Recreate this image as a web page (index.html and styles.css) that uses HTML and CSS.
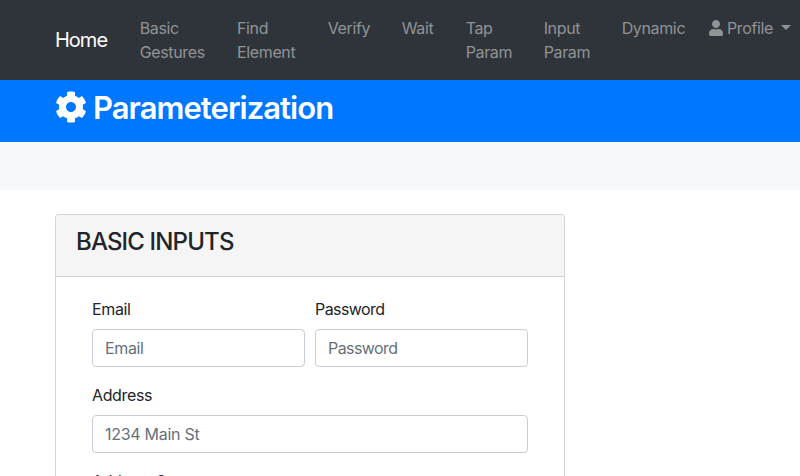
FILE: index.html
```html
<!DOCTYPE html>
<html lang="en">
<head>
<meta charset="utf-8">
<title>Parameterization</title>
<link rel="stylesheet" href="styles.css">
</head>
<body>
<nav class="navbar">
  <a class="brand" href="#">Home</a>
  <ul class="links">
    <li class="n1"><a href="#">Basic<br>Gestures</a></li>
    <li class="n2"><a href="#">Find<br>Element</a></li>
    <li class="n3"><a href="#">Verify</a></li>
    <li class="n4"><a href="#">Wait</a></li>
    <li class="n5"><a href="#">Tap<br>Param</a></li>
    <li class="n6"><a href="#">Input<br>Param</a></li>
    <li class="n7"><a href="#">Dynamic</a></li>
    <li class="profile"><a href="#"><svg class="user" viewBox="0 0 448 512"><path d="M224 256c70.7 0 128-57.3 128-128S294.700 0 224 0 96 57.300 96 128s57.300 128 128 128zm89.600 32h-16.700c-22.200 10.200-46.900 16-72.900 16s-50.600-5.800-72.900-16h-16.700C60.200 288 0 348.200 0 422.400V464c0 26.500 21.500 48 48 48h352c26.500 0 48-21.500 48-48v-41.600c0-74.200-60.200-134.400-134.400-134.400z"/></svg>Profile<i class="caret"></i></a></li>
  </ul>
</nav>
<header class="banner">
  <svg class="cog" viewBox="0 0 512 512"><path d="M487.400 315.700l-42.600-24.600c4.300-23.200 4.300-47 0-70.200l42.600-24.600c4.900-2.800 7.100-8.600 5.500-14-11.100-35.600-30-67.800-54.700-94.600-3.800-4.100-10-5.100-14.800-2.300L380.800 110c-17.900-15.400-38.500-27.300-60.800-35.100V25.800c0-5.600-3.900-10.500-9.400-11.700-36.700-8.200-74.300-7.800-109.200 0-5.500 1.200-9.400 6.100-9.400 11.700V75c-22.200 7.900-42.800 19.800-60.800 35.100L88.700 85.500c-4.900-2.800-11-1.900-14.800 2.300-24.700 26.700-43.600 58.900-54.700 94.600-1.700 5.400.6 11.200 5.500 14L67.300 221c-4.300 23.200-4.300 47 0 70.200l-42.600 24.600c-4.900 2.800-7.100 8.600-5.500 14 11.100 35.600 30 67.800 54.700 94.600 3.800 4.100 10 5.100 14.800 2.300l42.600-24.600c17.900 15.400 38.500 27.300 60.800 35.100v49.200c0 5.600 3.900 10.500 9.400 11.700 36.700 8.200 74.300 7.800 109.200 0 5.500-1.200 9.400-6.100 9.400-11.700v-49.200c22.200-7.900 42.800-19.800 60.800-35.100l42.600 24.600c4.900 2.800 11 1.900 14.800-2.300 24.700-26.700 43.600-58.900 54.700-94.600 1.500-5.500-.7-11.300-5.600-14.100zM256 336c-44.100 0-80-35.900-80-80s35.900-80 80-80 80 35.900 80 80-35.900 80-80 80z"/></svg>
  <h1>Parameterization</h1>
</header>
<section class="strip"></section>
<main class="card">
  <div class="card-header"><h4>BASIC INPUTS</h4></div>
  <form class="card-body">
    <div class="row">
      <div class="field"><label for="e">Email</label><input id="e" placeholder="Email"></div>
      <div class="field password"><label for="p">Password</label><input id="p" type="password" placeholder="Password"></div>
    </div>
    <div class="field"><label for="a">Address</label><input id="a" class="wide" placeholder="1234 Main St"></div>
    <div class="field"><label for="b">Address 2</label></div>
  </form>
</main>
</body>
</html>
```

FILE: styles.css
```css
* { box-sizing: border-box; }
body { margin: 0; height: 476px; display: flex; flex-direction: column; overflow: hidden; font: 16px/24px Inter, sans-serif; letter-spacing: -0.36px; color: #212529; background: #fff; }
h1, h4 { margin: 0; font-weight: 500; }
.navbar { display: flex; flex: none; align-items: center; height: 80px; padding-left: 55px; background: #2f343a; }
.brand { width: 68.700px; color: #fff; font-size: 20px; letter-spacing: -1px; text-decoration: none; }
.links { display: flex; margin: 0; padding: 0; list-style: none; height: 48px; white-space: nowrap; }
.links li { padding-left: 16px; flex: none; }
.links a { color: #919395; text-decoration: none; }
.n1 { width: 97.300px; }
.n2 { width: 90.700px; }
.n3 { width: 74px; }
.n4 { width: 64px; }
.n5 { width: 78px; }
.n6 { width: 78px; }
.n7 { width: 95px; }
.links .profile { padding-left: 8.300px; }
.user { width: 14px; height: 16px; fill: currentColor; vertical-align: -2px; margin-right: 4px; }
.caret { display: inline-block; margin-left: 8px; vertical-align: 4px; border: 5px solid transparent; border-top-color: currentColor; border-bottom: 0; }
.banner { display: flex; flex: none; height: 62px; padding: 8px 0 0 55px; background: #0077ff; color: #fff; }
.cog { width: 32px; height: 32px; margin: 3px 6px 0 0; fill: #fff; }
.banner h1 { padding-top: 1px; font-size: 31px; line-height: 38px; letter-spacing: -0.960px; font-weight: 600; }
.strip { flex: none; height: 48px; background: #f7f8fa; }
.card { flex: 1; min-height: 0; width: 510px; margin: 24px 0 0 55px; border: 1px solid #d5d5d5; border-bottom: 0; border-radius: 4px 4px 0 0; overflow: hidden; }
.card-header { height: 62px; padding: 12px 20px; background: #f5f5f5; border-bottom: 1px solid #d0d0d0; }
.card-header h4 { font-size: 24px; line-height: 29px; letter-spacing: -0.850px; }
.card-body { padding: 20px 36px; }
.row { display: grid; grid-template-columns: 213px 213px; gap: 10px; }
.field { margin-bottom: 16px; }
.password { letter-spacing: -0.580px; }
label { display: block; margin-bottom: 8px; }
input { display: block; width: 100%; height: 38px; padding: 6px 12px; border: 1px solid #c6cdd4; border-radius: 4px; background: #fff; font: inherit; letter-spacing: inherit; }
input::placeholder { color: #66717a; opacity: 1; }
.wide { letter-spacing: -0.280px; }
```
